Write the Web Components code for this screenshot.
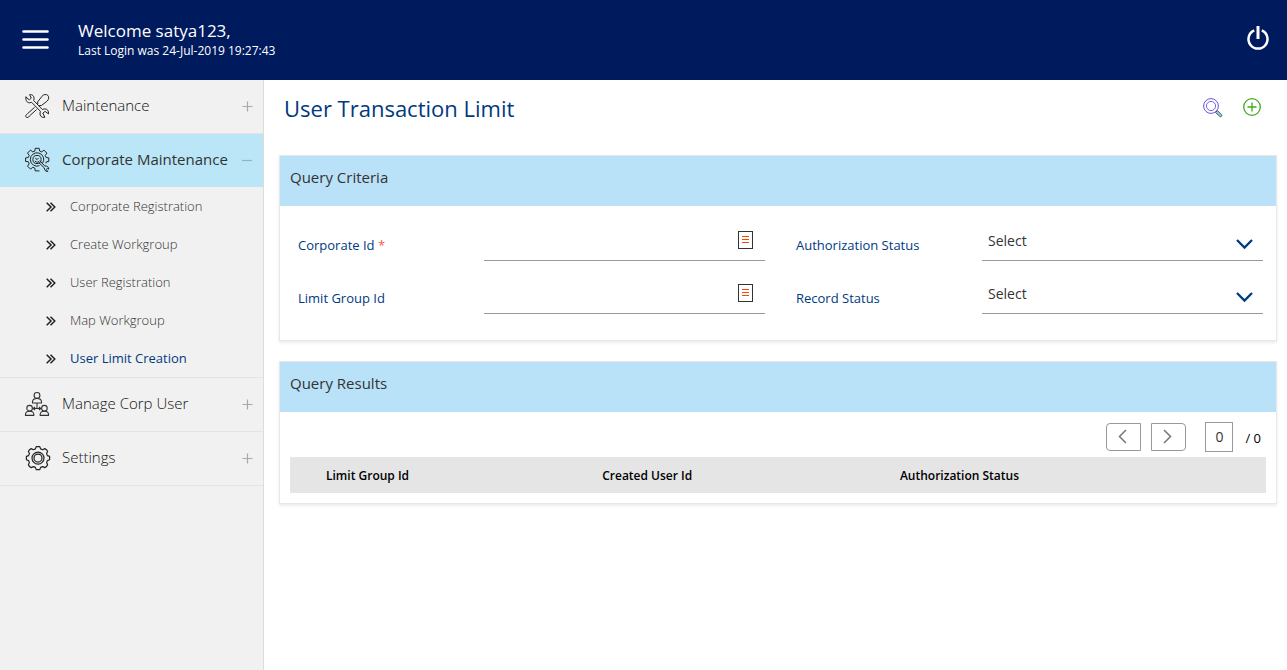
<!DOCTYPE html>
<html lang="en">
<head>
<meta charset="utf-8">
<meta name="viewport" content="width=device-width, initial-scale=1">
<title>User Transaction Limit</title>
<style>
  body { margin: 0; font-family: "Open Sans", "Noto Sans", sans-serif; font-size: 14px; color: #333; background: #fff; }
</style>
</head>
<body>
<limit-app></limit-app>
<script>
const define = (name, html, setup) => {
  const template = document.createElement('template');
  template.innerHTML = html;
  customElements.define(name, class extends HTMLElement {
    constructor() {
      super();
      this.attachShadow({ mode: 'open' }).append(template.content.cloneNode(true));
    }
    connectedCallback() { if (setup) setup(this, this.shadowRoot); }
  });
};

const ICONS = {
  menu: '<g stroke="#fff" stroke-width="2.600" stroke-linecap="round"><path d="M1.5 1.5h24M1.5 9.500h24M1.500 17.500h24"/></g>',
  power: '<g stroke="#fff" stroke-width="2.500" fill="none"><path d="M7.200 4.400A9.500 9.500 0 1 0 14.800 4.400"/><path d="M11 0v13" stroke-width="3"/></g>',
  search: '<g fill="none"><circle cx="8" cy="8" r="7.400" stroke="#6a52e0"/><circle cx="8" cy="8" r="4.600" stroke="#7a64e4"/><path d="M12.600 14.400l1.800-1.800 4 4a1 1 0 0 1-1.800 1.800z" stroke="#2d5f73" fill="#a9c6d6"/></g>',
  add: '<g fill="none" stroke="#43ab1c" stroke-width="1.300"><circle cx="9" cy="9" r="8.300"/><path d="M9 4.500v9M4.500 9h9"/></g>',
  tools: '<g fill="none" stroke="#222" stroke-linejoin="round" stroke-linecap="round"><path d="M1 3.200l3.300 2.600 2-1.700L4.600.7C7.500.2 9.300 2.100 9 5.200l-.3 1.300 8.600 9 2.200-.6c2.700-.2 4.400 2 4 5l-3.400-2.500-2.300 1.700 2.100 4.200c-3.300.6-5.200-1.200-4.900-4.200l.4-1.800-8.800-9-1.900.5C1.900 8.900.300 6.200 1 3.200z"/><path d="M12.800 9.600l-.2-1.600 4.200-5.500c1.700-2.300 4.500-2.600 6-1.100s1.200 4.200-.9 5.900l-5.600 4.300-1.700-.1M9.400 13.500l-6.900 6.200c-1.900 1.300-2.300 2.500-1.300 3.400 1 .9 2.300.5 3.300-1.200l6.900-6.200"/></g>',
  gearTool: '<g fill="none" stroke="#222" stroke-linejoin="round"><path d="M14.500 22.900h-4.300l-.3-2.700-2.100-.9-2.300 1.800-3-3 1.700-2.200-.9-2.200-2.700-.3V9.900l2.700-.4.9-2.100-1.700-2.300 3-3 2.300 1.800 2.100-.9.300-2.700h4l.4 2.700 2.100.9 2.200-1.800 3 3-1.700 2.300.9 2.100 2.700.4v3.500l-2.400.4-.6 1.600"/><path d="M17.600 15.200A6.700 6.700 0 1 0 14.500 17.700"/><circle cx="12" cy="11.500" r="4.100"/><path d="M10.200 10.100l1.900 1.500 1.500-1.600M9.900 13c1.800 1.900 3.400 1.300 4.200-.1M13.500 14.300l5.800 5.600c.1 2.200 1.100 3.700 3.500 3.600l-1.500-2 1.100-1.300 1.300 1c0-2.300-1.400-3.500-3.800-3.200l-5.200-5.100"/></g>',
  people: '<g fill="none" stroke="#333" stroke-width="1.100" stroke-linejoin="round"><circle cx="12" cy="3.400" r="2.900"/><path d="M7.500 11V9.500c.2-2 1.700-3 4.500-3s4.300 1 4.500 3V11z"/><circle cx="4.600" cy="16.200" r="2.800"/><path d="M.5 23.400v-1.300c.2-2 1.500-2.900 4.100-2.900s4 .9 4.200 2.900v1.300z"/><circle cx="19.400" cy="16.200" r="2.800"/><path d="M15.200 23.400v-1.300c.2-2 1.600-2.900 4.200-2.900s3.900.9 4.100 2.900v1.300zM12 11v5.500M8.500 16.500h7M10 15l-1.700 1.500L10 18M14 15l1.700 1.500L14 18"/></g>',
  gear: '<g fill="none" stroke="#222" stroke-width="1.200" stroke-linejoin="round"><path d="M11.200.6h3.600l.8 2.300 2 .8 2.200-1.100q2 .8 2.800 2.800l-1 2.200.8 2 2.200.8v3.400l-2.200.8-.8 2 1 2.200q-.8 2-2.800 2.800l-2.200-1-2 .8-.8 2.200h-3.600l-.8-2.200-2-.8-2.200 1q-2-.8-2.800-2.800l1-2.200-.8-2-2.200-.8v-3.400l2.200-.8.8-2-1-2.200q.8-2 2.800-2.800l2.200 1.100 2-.8z"/><circle cx="13" cy="12.100" r="6"/><circle cx="13" cy="12.100" r="4"/></g>',
  chevrons: '<path d="M.7.7L5 5 .7 9.300M4.500.7L8.800 5 4.500 9.300" fill="none" stroke="#222" stroke-width="1.500"/>',
  plus: '<path d="M5.500.5v10M.5 5.500h10" stroke="#a8a8a8" stroke-width="1.200"/>',
  minus: '<path d="M0 5.500h10" stroke="#8fb4c2" stroke-width="1.200"/>',
  list: '<rect x=".5" y=".5" width="14" height="17" fill="none" stroke="#333"/><path d="M4 5.500h7M4 8.500h7M4 11.500h7" stroke="#ff4500"/>',
  down: '<path d="M1 1l7.500 7.500L16 1" fill="none" stroke="#003a80" stroke-width="2.300"/>',
  left: '<path d="M8 1L1.500 7.500 8 14" fill="none" stroke="#777" stroke-width="1.500"/>',
  right: '<path d="M1 1l6.500 6.500L1 14" fill="none" stroke="#777" stroke-width="1.500"/>'
};

/* <ui-icon name w h> draws one glyph of the icon set */
customElements.define('ui-icon', class extends HTMLElement {
  static observedAttributes = ['name'];
  constructor() { super(); this.attachShadow({ mode: 'open' }); }
  attributeChangedCallback() { this.draw(); }
  connectedCallback() { this.draw(); }
  draw() {
    const name = this.getAttribute('name');
    if (!name) return;
    const w = this.getAttribute('w'), h = this.getAttribute('h');
    this.shadowRoot.innerHTML = `
      <style>:host { display: inline-flex; flex: none; } svg { display: block; overflow: visible; }</style>
      <svg width="${w}" height="${h}" viewBox="0 0 ${w} ${h}" aria-hidden="true">${ICONS[name]}</svg>`;
  }
});

define('app-header', `
  <style>
    :host { display: block; background: #001a5e; color: #fff; }
    header { display: flex; align-items: center; height: 80px; padding: 0 18px 0 22px; box-sizing: border-box; }
    button { background: none; border: 0; padding: 0; display: flex; cursor: pointer; }
    .menu { padding-bottom: 1px; }
    .power { padding-bottom: 4px; }
    .who { flex: 1; margin-left: 29px; }
    .name { font-size: 17px; line-height: 22px; }
    .last { font-size: 12px; line-height: 18px; }
  </style>
  <header>
    <button class="menu" aria-label="Menu"><ui-icon name="menu" w="27" h="19"></ui-icon></button>
    <div class="who"><div class="name">Welcome satya123,</div><div class="last">Last Login was 24-Jul-2019 19:27:43</div></div>
    <button class="power" aria-label="Log out"><ui-icon name="power" w="22" h="24"></ui-icon></button>
  </header>`);

define('nav-group', `
  <style>
    :host { display: block; border-bottom: 1px solid #e4e4e4; }
    a { display: flex; align-items: center; height: 53px; padding: 0 10px 1px 25px; box-sizing: border-box;
        color: #111; text-decoration: none; font-size: 15px; line-height: 20px; font-weight: 300; }
    .text { flex: 1; margin-left: 13px; padding-bottom: 2px; white-space: nowrap; }
    :host([open]) a { background: #bae6f7; color: #333; font-weight: 400; }
  </style>
  <a href="#"><ui-icon id="lead" w="24" h="24"></ui-icon><span class="text"></span><ui-icon id="mark" w="11" h="11"></ui-icon></a>
  <slot></slot>`,
  (host, root) => {
    root.querySelector('.text').textContent = host.getAttribute('label');
    root.querySelector('#lead').setAttribute('name', host.getAttribute('icon'));
    root.querySelector('#mark').setAttribute('name', host.hasAttribute('open') ? 'minus' : 'plus');
  });

define('nav-item', `
  <style>
    :host { display: block; }
    a { display: flex; align-items: center; height: 38px; padding-left: 46px; gap: 15px;
        color: #333; text-decoration: none; font-size: 13px; line-height: 18px; font-weight: 300; }
    ui-icon { padding-top: 2px; }
    :host([current]) a { color: #003a80; font-weight: 400; }
  </style>
  <a href="#"><ui-icon name="chevrons" w="9" h="10"></ui-icon><span><slot></slot></span></a>`);

define('side-nav', `
  <style>
    :host { display: block; box-sizing: border-box; width: 264px; flex: none; background: #f1f1f1; border-right: 1px solid #dcdcdc; }
  </style>
  <nav aria-label="Main">
    <nav-group icon="tools" label="Maintenance"></nav-group>
    <nav-group icon="gearTool" label="Corporate Maintenance" open>
      <nav-item>Corporate Registration</nav-item>
      <nav-item>Create Workgroup</nav-item>
      <nav-item>User Registration</nav-item>
      <nav-item>Map Workgroup</nav-item>
      <nav-item current>User Limit Creation</nav-item>
    </nav-group>
    <nav-group icon="people" label="Manage Corp User"></nav-group>
    <nav-group icon="gear" label="Settings"></nav-group>
  </nav>`);

define('page-title', `
  <style>
    :host { display: flex; align-items: center; justify-content: space-between; height: 55px; padding: 0 16px 0 5px; }
    h1 { margin: 0; font-size: 22px; line-height: 30px; font-weight: 400; color: #003a80; }
    .actions { display: flex; align-items: center; gap: 21px; padding-bottom: 1px; }
    button { background: none; border: 0; padding: 0; display: flex; cursor: pointer; }
  </style>
  <h1><slot></slot></h1>
  <div class="actions">
    <button aria-label="Search"><ui-icon name="search" w="19" h="19"></ui-icon></button>
    <button aria-label="Add"><ui-icon name="add" w="18" h="18"></ui-icon></button>
  </div>`);

define('panel-card', `
  <style>
    :host { display: block; background: #fff; border: 1px solid #e8e8e8; box-shadow: 0 2px 3px rgba(0,0,0,.08); }
    h2 { margin: 0; height: 50px; padding: 11px 10px 0; box-sizing: border-box; background: #b9e1f8;
         font-size: 15px; line-height: 20px; font-weight: 400; color: #333; }
  </style>
  <h2></h2><slot></slot>`,
  (host, root) => { root.querySelector('h2').textContent = host.getAttribute('heading'); });

const FIELD_CSS = `
  :host { display: grid; grid-template-columns: 186fr 281fr; align-items: end; height: 53px; padding: 0 13px 0 18px; }
  label { font-size: 13px; line-height: 18px; padding-bottom: 7px; color: #003a80; }
  .box { display: flex; align-items: center; height: 40px; border-bottom: 1px solid #999; box-sizing: border-box; position: relative; }
  .box > * { font: inherit; color: #333; background: none; border: 0; outline: 0; min-width: 0; }`;

define('lookup-field', `
  <style>${FIELD_CSS}
    input { flex: 1; height: 39px; padding: 0 6px; box-sizing: border-box; }
    button { display: flex; padding: 0 0 2px; margin-right: 12px; cursor: pointer; }
    .req { color: #f4574f; }
  </style>
  <label for="f"><span class="text"></span> <span class="req"></span></label>
  <div class="box"><input id="f" type="text"><button aria-label="Look up"><ui-icon name="list" w="15" h="18"></ui-icon></button></div>`,
  (host, root) => {
    root.querySelector('.text').textContent = host.getAttribute('label');
    if (host.hasAttribute('required')) root.querySelector('.req').textContent = '*';
  });

define('select-field', `
  <style>${FIELD_CSS}
    select { flex: 1; height: 39px; padding: 0 30px 0 6px; appearance: none; }
    ui-icon { position: absolute; right: 10px; top: 18px; pointer-events: none; }
  </style>
  <label for="f"></label>
  <div class="box"><select id="f"><option>Select</option></select><ui-icon name="down" w="17" h="10"></ui-icon></div>`,
  (host, root) => { root.querySelector('label').textContent = host.getAttribute('label'); });

define('criteria-form', `
  <style>
    form { display: grid; grid-template-columns: 1fr 1fr; padding: 2px 0 26px; }
  </style>
  <form>
    <lookup-field label="Corporate Id" required></lookup-field>
    <select-field label="Authorization Status"></select-field>
    <lookup-field label="Limit Group Id"></lookup-field>
    <select-field label="Record Status"></select-field>
  </form>`);

define('result-pager', `
  <style>
    :host { display: flex; align-items: center; justify-content: flex-end; height: 30px; padding-right: 5px; }
    button { display: flex; align-items: center; justify-content: center; width: 35px; height: 28px; padding: 0 2px 2px 0;
             background: #fff; border: 1px solid #999; cursor: pointer; }
    .prev { border-radius: 4px 0 0 4px; margin-right: 10px; }
    .next { border-radius: 0 4px 4px 0; margin-right: 19px; }
    input { width: 28px; height: 30px; padding: 0 0 2px; box-sizing: border-box; border: 1px solid #999; text-align: center;
            font: inherit; color: #333; background: #fff; }
    .total { margin-left: 12px; font-size: 13px; line-height: 18px; color: #000; padding-top: 2px; }
  </style>
  <button class="prev" aria-label="Previous page"><ui-icon name="left" w="9" h="15"></ui-icon></button>
  <button class="next" aria-label="Next page"><ui-icon name="right" w="9" h="15"></ui-icon></button>
  <input aria-label="Page" value="0"><span class="total">/ 0</span>`);

define('result-table', `
  <style>
    :host { display: block; }
    table { width: 100%; border-collapse: collapse; table-layout: fixed; }
    th { height: 36px; padding: 2px 0 0 36px; box-sizing: border-box; background: #e5e5e5; text-align: left;
         font-size: 12px; line-height: 18px; font-weight: 600; color: #000; }
    .group { width: 28.3%; } .user { width: 30.5%; }
  </style>
  <table><thead><tr><th class="group" scope="col">Limit Group Id</th><th class="user" scope="col">Created User Id</th><th scope="col">Authorization Status</th></tr></thead></table>`);

define('limit-app', `
  <style>
    :host { display: flex; flex-direction: column; min-height: 100vh; }
    .body { display: flex; flex: 1; }
    main { flex: 1; min-width: 0; padding: 0 10px 0 15px; }
    page-title { margin-bottom: 20px; }
    panel-card { margin-bottom: 20px; }
    .results { padding: 10px; display: grid; gap: 5px; }
  </style>
  <app-header></app-header>
  <div class="body">
    <side-nav></side-nav>
    <main>
      <page-title>User Transaction Limit</page-title>
      <panel-card heading="Query Criteria"><criteria-form></criteria-form></panel-card>
      <panel-card heading="Query Results"><div class="results"><result-pager></result-pager><result-table></result-table></div></panel-card>
    </main>
  </div>`);
</script>
</body>
</html>
